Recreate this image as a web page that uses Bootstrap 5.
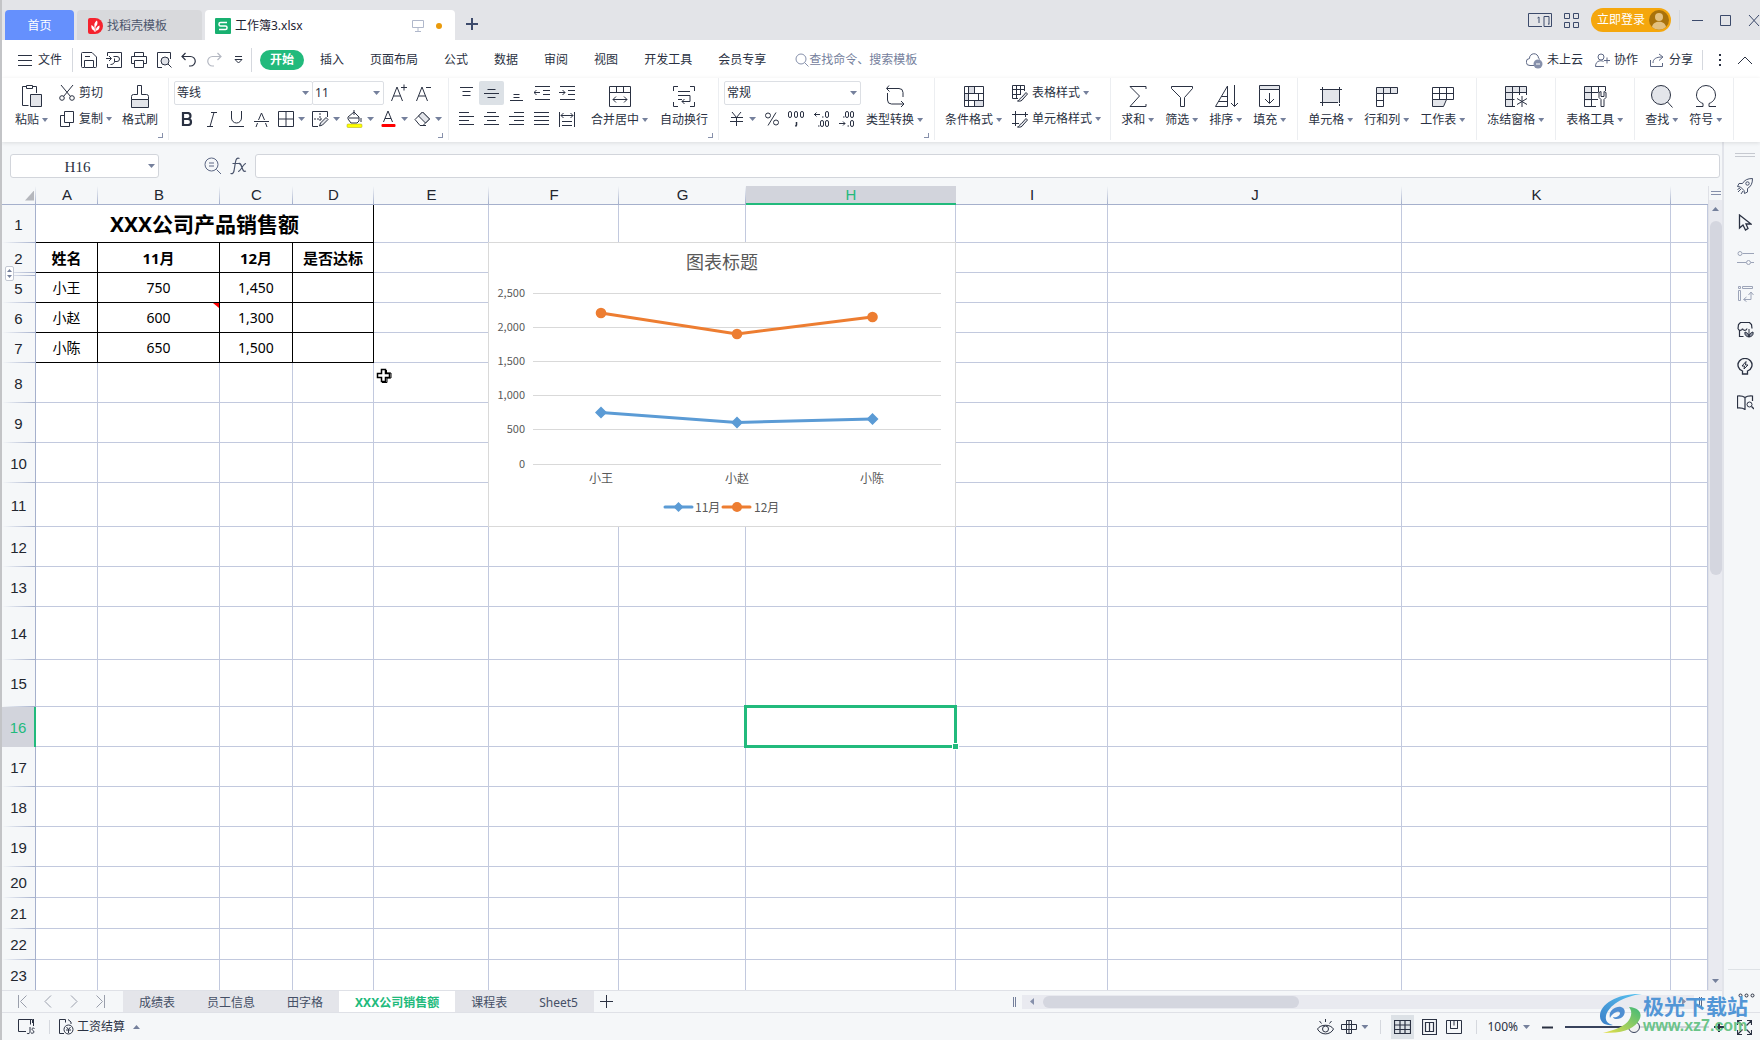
<!DOCTYPE html>
<html lang="zh-CN">
<head>
<meta charset="utf-8">
<meta name="viewport" content="width=device-width, initial-scale=1">
<title>工作簿3.xlsx</title>
<link href="https://cdn.jsdelivr.net/npm/bootstrap@5.3.0/dist/css/bootstrap.min.css" rel="stylesheet">
<style>
:root{--ink:#2a3142;--soft:#5c6784;--line:#c2c9de;--axis:#a5b0cc;--green:#22ba7c;--pane:#f5f7f9;--track:#e9eaf0;--thumb:#d4d6df}
body{height:100vh;min-width:1200px;overflow:hidden;background:var(--pane);color:var(--ink);font:12px/16px "Noto Sans","Noto Sans CJK SC",sans-serif;border-left:2px solid #c3c4c7}
svg{display:block;flex:none;fill:none;stroke:currentColor;stroke-width:1}
button,.menu-link{border:0;background:none;padding:0;color:inherit;text-decoration:none;white-space:nowrap}
input,select{font:inherit;color:inherit}
.caret-d,.caret-u{flex:none;width:7px;height:4px;background:#75809c;clip-path:polygon(0 0,100% 0,50% 100%)}
.caret-u{clip-path:polygon(50% 0,100% 100%,0 100%)}
.vr-line{width:1px;background:#d5d8de;flex:none}
/* title bar */
.titlebar{height:40px;background:#e3e4e8;color:#3c4a6b;padding-left:3px}
.doc-tab{height:30px;border-radius:4px 4px 0 0;margin-right:3px;padding-top:2px}
.tab-home{width:69px;background:#6590fd;color:#fff}
.tab-docer{width:125px;background:#d8d9dc;color:#4c566d;padding-left:11px}
.tab-book{width:250px;background:#fff;color:#1d2333;padding:2px 13px 0 10px}
.unsaved{width:6px;height:6px;background:#ea9a0b}
.login{height:24px;width:80px;border-radius:12px;background:#f5a70d;color:#fff;padding:0 2px 0 6px}
/* menu bar */
.menubar{height:38px;background:#fff;padding-top:2px}
.quick button{width:25px;height:24px}
.menu-link{padding:2px 13px}
.menu-link.on{background:var(--green);color:#fff;font-weight:700;border-radius:10px;padding:2px 10px;margin-right:3px}
.find-cmd{border:0;width:140px;padding:0;outline:0}
.find-cmd::placeholder{color:#75809c;opacity:1}
/* ribbon */
.ribbon{height:64px;background:#fff;box-shadow:0 1px 4px #0000001c;z-index:2}
.grp{position:relative;border-right:1px solid #eceef1;padding-top:3px;height:62px;flex:none}
.grp-std{padding-left:10px;padding-right:11px}
.big{display:flex;flex-direction:column;align-items:center;padding-top:3px;gap:4px}
.big .cap{display:flex;align-items:center}
.big .caret-d,.txt .caret-d{margin-left:3px;width:6px}
.slot{display:flex;align-items:center;justify-content:center;width:25px;height:24px;flex:none}
.slot-dd{width:34px;justify-content:flex-start;padding-left:4px;gap:4px}
.slot.on{background:#dce1e6;border-radius:2px}
.txt{display:flex;align-items:center;height:24px}
.txt svg{margin-right:4px}
.launch{position:absolute;right:5px;bottom:2px;width:5px;height:5px;border:solid #8690ab;border-width:0 1px 1px 0}
.pick{position:relative;height:24px}
.pick select,.namebox input{appearance:none;width:100%;height:100%;border:1px solid #dcdfe4;border-radius:2px;background:#fff;padding:0 6px 0 2px;outline:0}
.pick .caret-d,.namebox .caret-d{position:absolute;right:4px;top:10px}
/* formula bar */
.fxbar{height:44px;padding:12px 2px 8px 8px}
.namebox{position:relative;width:149px;height:24px}
.namebox input{font:15px/20px "Liberation Serif",serif;text-align:center;padding:2px 14px 0 0;border-color:#d2d5db;border-radius:3px}
.fx-input{border:1px solid #d2d5db;border-radius:3px;background:#fff;height:24px;outline:0;min-width:0}
/* sheet */
.sheet{overflow:hidden;min-height:0;min-width:0;background:#fff}
.cells{table-layout:fixed;border-collapse:separate;border-spacing:0;width:100%;color:#000}
.cells th,.cells td{padding:1px 0 0;text-align:center;vertical-align:middle;overflow:visible;white-space:nowrap}
.cells td{border-right:1px solid var(--line);border-bottom:1px solid var(--line);position:relative;font:14px/20px "Noto Sans","Noto Sans CJK SC",sans-serif}
.cells th{font:400 15px/20px "Liberation Sans",sans-serif;color:#22262f;background:var(--pane)}
.cells thead th{height:19px;padding:0;line-height:18px;border-bottom:1px solid var(--axis);background:linear-gradient(#a5b0cc00,#a5b0cc) right/1px 100% no-repeat var(--pane)}
.cells thead th:last-child{background:var(--pane)}
.cells tbody th{position:relative;border-right:1px solid var(--axis);background:linear-gradient(90deg,#a5b0cc00,#a5b0cc) bottom/100% 1px no-repeat var(--pane)}
.cells thead th.sel{background:#d2d4dc;color:var(--green);border-bottom:2px solid var(--green);line-height:17px}
.cells tbody th.sel{background:#d2d4dc;color:var(--green);border-right:2px solid var(--green)}
.cells td.ink{border-color:#000}
.cells td.hd{font-size:15px;font-weight:700}
.cells td.ttl{font-size:21px;line-height:28px;font-weight:700;padding:0}
.corner{width:9px;height:10px;margin:1px 2px 0 auto;background:#b5b7bd;clip-path:polygon(100% 0,100% 100%,0 100%)}
.note{position:absolute;right:0;top:0;width:6px;height:5px;background:red;clip-path:polygon(0 0,100% 0,100% 100%)}
.fold{position:absolute;left:3px;top:-7px;width:9px;height:15px;background:#fff;border:1px solid #c3c8d3;border-radius:2px;display:flex;flex-direction:column;align-items:center;justify-content:center;gap:3px}
.fold i{width:5px;height:3px}
.pick-box{position:absolute;inset:-2px;border:3px solid var(--green);z-index:1}
.pick-box i{position:absolute;right:-5px;bottom:-5px;width:7px;height:7px;background:var(--green);border:1px solid #fff}
.fold-mark{position:absolute;left:0;right:0;top:2px;height:1px;background:linear-gradient(90deg,#a5b0cc00,#a5b0cc)}
.chart{position:absolute;left:486px;top:56px;background:#fff;z-index:1}
.chart text{stroke:none;fill:#595959;font-family:"Noto Sans CJK SC",sans-serif;font-size:12px}
.chart .ax{font-size:11px;text-anchor:end}
.pointer{position:absolute;left:374px;top:182px;z-index:1}
.vscroll{width:14px;background:var(--track);border-left:1px solid #dfe1e7}
.vscroll .split{height:14px;background:var(--pane);width:100%}
.vscroll .knob{width:12px;height:44%;border-radius:6px;background:var(--thumb)}
.side{width:38px;border-left:2px solid #e2e4ea;color:var(--ink)}
.side button{height:36px;width:100%;display:flex;justify-content:center;align-items:center;padding-left:6px}
.side .dim{color:#9ca4b8}
/* sheet tabs */
.tabsbar{height:22px;border-top:1px solid #dfe1e7}
.leaf{height:21px;padding:2px 16px 0;background:#e4e5ea;color:#454f66}
.leaf.on{background:#fff;color:var(--green);font-weight:700}
.tabnav button{width:26px;color:#9a9fac}
.hscroll{width:672px;height:14px;background:var(--track)}
.hscroll .knob{width:256px;height:12px;border-radius:6px;background:var(--thumb);margin-left:9px}
.tri-l{width:4px;height:7px;background:#8690ab;clip-path:polygon(100% 0,100% 100%,0 50%)}
.statusbar{height:28px;border-top:1px solid #dfe1e7;padding-top:1px}
.view-on{background:#dce1e6}
.zoomer{appearance:none;width:144px;height:14px;background:linear-gradient(90deg,#38425c 48%,#cfd3db 48%) center/100% 2px no-repeat;margin:0}
.zoomer::-webkit-slider-thumb{appearance:none;width:12px;height:12px;border-radius:50%;border:1px solid #38425c;background:#f1f1f1}
.brand{position:absolute;right:12px;bottom:5px;z-index:5;pointer-events:none}
.brand b{font:700 21px/24px "Noto Sans CJK SC",sans-serif;color:#5296d6}
.brand span{font:700 16px/18px "Liberation Sans",sans-serif;color:#6bc489}
</style>
<script src="https://cdn.jsdelivr.net/npm/bootstrap@5.3.0/dist/js/bootstrap.bundle.min.js"></script>
</head>
<body class="d-flex flex-column m-0 position-relative">

<header class="titlebar d-flex align-items-end flex-shrink-0">
  <button class="doc-tab tab-home">首页</button>
  <button class="doc-tab tab-docer d-flex align-items-center">
    <svg width="15" height="16" class="me-1" stroke="none"><path d="M0 2a2 2 0 0 1 2-2h5a8 8 0 0 1 0 16H2a2 2 0 0 1-2-2z" fill="#f5222d" stroke="none"/><path d="M7 14V8" stroke="#fff" stroke-width="1"/><path d="M7 13C3.500 12 3 9 3.500 7 5.500 8 7 10 7 13zM7 9C5.500 6 7 4 9 2.500 10 5 9.500 7.500 7 9zM7.500 13C8 10 9 8.500 11.500 7.500c.5 3-1 5-4 5.500z" fill="#fff" stroke="none"/></svg>找稻壳模板</button>
  <div class="doc-tab tab-book d-flex align-items-center">
    <svg width="16" height="16" class="me-1"><rect width="16" height="16" rx="1" fill="#18b070" stroke="none"/><path d="M12 4.500H5.500a1.500 1.500 0 0 0-1.500 1.500v.5A1.500 1.500 0 0 0 5.500 8h5A1.500 1.500 0 0 1 12 9.500v.5a1.500 1.500 0 0 1-1.500 1.500H4" stroke="#fff" stroke-width="1.500"/></svg>
    <span>工作簿3.xlsx</span>
    <svg width="12" height="12" class="ms-auto" style="margin-right:12px" color="#b0b8cb"><path d="M.5.5h11v7H.5zM6 8v3M3 11.500h6"/></svg>
    <span class="unsaved rounded-circle"></span>
  </div>
  <button class="ms-2 mb-2" style="padding-bottom:2px" aria-label="新建"><svg width="12" height="12"><path d="M6 0v12M0 6h12" stroke-width="2"/></svg></button>
  <div class="d-flex align-items-center ms-auto h-100">
    <button aria-label="单窗口"><svg width="24" height="14"><path d="M14 13.500H.5V.5h23v13H16V3.500h5v8M11 4v6M9.500 5l1.500-1M20 11h1"/></svg></button>
    <button aria-label="应用" class="mx-2 px-1"><svg width="15" height="15"><path d="M.5.5h5v5h-5zM9.500.5h5v5h-5zM.5 9.500h5v5h-5zM9.500 9.500h5v5h-5z"/></svg></button>
    <button class="login d-flex align-items-center justify-content-between">立即登录<svg width="20" height="20"><circle cx="10" cy="10" r="10" fill="#a9720b" stroke="none"/><circle cx="10" cy="7" r="4" fill="#e3c07f" stroke="none"/><path d="M3 17c1-7 13-7 14 0a10 10 0 0 1-14 0z" fill="#e3c07f" stroke="none"/></svg></button>
    <span class="vr-line ms-2" style="height:20px"></span>
    <button aria-label="最小化" style="margin:0 17px 0 12px"><svg width="11" height="11"><path d="M0 5.500h11"/></svg></button>
    <button aria-label="最大化" style="margin-right:17px"><svg width="11" height="11"><path d="M.5.5h10v10H.5z"/></svg></button>
    <button aria-label="关闭"><svg width="12" height="11"><path d="M1 0l10 11M11 0L1 11"/></svg></button>
  </div>
</header>

<nav class="menubar d-flex align-items-center flex-shrink-0" aria-label="菜单">
  <button class="d-flex align-items-center ms-3"><svg width="14" height="12" style="margin-right:6px"><path d="M0 1.500h14M0 6.500h14M0 11.500h14"/></svg>文件</button>
  <span class="vr-line" style="height:24px;margin:0 3px 0 10px"></span>
  <div class="quick d-flex">
    <button class="slot" aria-label="保存"><svg width="16" height="16"><path d="M3 15.500H1.500A1 1 0 0 1 .5 14.500v-13a1 1 0 0 1 1-1H11L15.500 5v9.500a1 1 0 0 1-1 1H13M3.500 15.500v-7h9v7zM4 4.500h5"/></svg></button>
    <button class="slot" aria-label="输出为PDF"><svg width="16" height="16"><path d="M1.500 4V.5h14v15h-14V12M0 6.500h5M3 4l2.500 2.500L3 9M7.500 4.500H11a2.500 2.500 0 0 1 0 5H8.500V6.500M8.500 9.500c0 2-2 3-4 3"/></svg></button>
    <button class="slot" aria-label="打印"><svg width="16" height="16"><path d="M3.500 4.500v-4h9v4M3.500 11.500h-3v-7h15v7h-3M3.500 8.500h9v7h-9z"/></svg></button>
    <button class="slot" aria-label="打印预览"><svg width="16" height="16"><path d="M6 15.500H1.500V.5h13V7"/><circle cx="9" cy="9" r="4" fill="#e0e2e8"/><path d="M12 12l3.500 3.500"/></svg></button>
    <button class="slot" aria-label="撤销"><svg width="16" height="16"><path d="M4.500 1L1 4.500 4.500 8M1 4.500h8.500a4.500 4.500 0 0 1 0 9.500H8" stroke-width="1.200"/></svg></button>
    <button class="slot" aria-label="恢复" style="color:#b4b8c2"><svg width="16" height="16"><path d="M11.500 1L15 4.500 11.500 8M15 4.500H6.500a4.500 4.500 0 0 0 0 9.500H8" stroke-width="1.200"/></svg></button>
    <button class="slot" aria-label="更多"><svg width="9" height="8"><path d="M1 .5h7M1 3.500h7L4.500 7z"/></svg></button>
  </div>
  <span class="vr-line me-2" style="height:24px"></span>
  <a class="menu-link on" href="#">开始</a><a class="menu-link" href="#">插入</a><a class="menu-link" href="#">页面布局</a><a class="menu-link" href="#">公式</a><a class="menu-link" href="#">数据</a><a class="menu-link" href="#">审阅</a><a class="menu-link" href="#">视图</a><a class="menu-link" href="#">开发工具</a><a class="menu-link" href="#">会员专享</a>
  <label class="d-flex align-items-center ms-3"><svg width="14" height="14" color="#8690ab"><circle cx="6" cy="6" r="5"/><path d="M9.500 9.500l4 4"/></svg><input class="find-cmd" placeholder="查找命令、搜索模板" aria-label="查找命令"></label>
  <div class="d-flex align-items-center ms-auto">
    <button class="d-flex align-items-center"><svg width="17" height="17" class="me-1" color="#5c6784"><path d="M9 13.500H4A3.500 3.500 0 0 1 3.500 6.500 4.500 4.500 0 0 1 12.500 6"/><path d="M12.500 6a3 3 0 0 1 1 1.500"/><circle cx="12" cy="12" r="4.500" fill="#8690ab" stroke="none"/><path d="M10 12h4" stroke="#fff"/></svg>未上云</button>
    <button class="d-flex align-items-center ms-2 ps-1"><svg width="15" height="15" class="me-1" color="#5c6784"><circle cx="6" cy="4" r="3"/><path d="M9 13.500H.5c0-7 7-6 8-5M9 7.500h6M12 4.500v6"/></svg>协作</button>
    <button class="d-flex align-items-center ms-2 ps-1"><svg width="15" height="15" class="me-1" color="#5c6784"><path d="M.5 7v6.500h12V10M3 10c0-4 3-6 9-6M9 1l4 3-4 3.500"/></svg>分享</button>
    <span class="vr-line" style="height:20px;margin:0 15px 0 9px"></span>
    <button aria-label="更多"><svg width="4" height="14"><path d="M2 1v2M2 6v2M2 11v2" stroke-width="2"/></svg></button>
    <button aria-label="收起" class="ms-3 me-2"><svg width="14" height="9"><path d="M0 8l7-7 7 7"/></svg></button>
  </div>
</nav>

<section class="ribbon d-flex position-relative flex-shrink-0" aria-label="开始">
  <div class="grp d-flex" style="padding-left:13px;padding-right:10px">
    <button class="big"><svg width="24" height="24"><path d="M8.500 21.500h-6v-19h4M12.500 2.500h4V9M6.500 1.500h6v3h-6z"/><path d="M10.500 10.500h11v12h-11z" fill="#e3e5ea"/></svg><span class="cap">粘贴<i class="caret-d"></i></span></button>
    <div class="d-flex flex-column gap-0" style="margin:0 10px 0 11px">
      <button class="txt"><svg width="16" height="16"><path d="M2 0l9.500 11.500M14 0L4.500 11.500"/><circle cx="3" cy="13" r="2.300"/><circle cx="13" cy="13" r="2.300"/></svg>剪切</button>
      <button class="txt" style="margin-top:2px"><svg width="16" height="16"><path d="M5.500.5h9v11h-9zM5 4.500H1.500v11h9V12"/></svg>复制<i class="caret-d"></i></button>
    </div>
    <button class="big"><svg width="24" height="24"><path d="M9.500 10.500v-9h4v9h5a2 2 0 0 1 2 2v3h-17v-3a2 2 0 0 1 2-2z"/><path d="M3.500 15.500h17v8h-17z" fill="#e3e5ea"/></svg><span class="cap">格式刷</span></button>
    <i class="launch"></i>
  </div>
  <div class="grp" style="padding-left:5px;padding-right:4px">
    <div class="d-flex">
      <div class="pick" style="width:139px"><select aria-label="字体"><option>等线</option></select><i class="caret-d"></i></div>
      <div class="pick" style="width:72px;margin-left:-1px"><select aria-label="字号"><option>11</option></select><i class="caret-d"></i></div>
      <button class="slot" style="margin-left:2px" aria-label="增大字号"><svg width="16" height="18"><path d="M.5 17L6 3l5.500 14M2.500 12h7M10 3.500h6M13 .5v6"/></svg></button>
      <button class="slot" aria-label="减小字号"><svg width="16" height="18"><path d="M.5 17L6 3l5.500 14M2.500 12h7M10 3.500h5"/></svg></button>
    </div>
    <div class="d-flex" style="margin-top:2px">
      <button class="slot" aria-label="加粗"><svg width="12" height="14"><path d="M2 1h4.500a3 3 0 0 1 0 6H2zM2 7h5a3 3 0 0 1 0 6H2z" stroke-width="2.200"/></svg></button>
      <button class="slot" aria-label="倾斜"><svg width="10" height="15"><path d="M4 .5h6M0 14.500h6M7 .5L3 14.500"/></svg></button>
      <button class="slot" aria-label="下划线"><svg width="15" height="16"><path d="M2.500 0v7a5 5 0 0 0 10 0V0M0 15.500h15"/></svg></button>
      <button class="slot" aria-label="删除线"><svg width="15" height="15"><path d="M2 15l1.500-4M13 15l-1.500-4M4.500 8L7.500 1l3 7M0 9.500h15"/></svg></button>
      <button class="slot slot-dd" aria-label="边框"><svg width="16" height="16"><path d="M.5.5h15v15H.5zM8 .5v15M.5 8h15"/></svg><i class="caret-d"></i></button>
      <button class="slot slot-dd" aria-label="绘图边框"><svg width="17" height="16"><path d="M6 15.500H.5V.5h15V6"/><path d="M8 2v9M2 8h8" stroke-dasharray="2 1"/><path d="M7.500 15l1-3L14 6.500l2 2L10.500 14z" fill="#e3e5ea"/></svg><i class="caret-d"></i></button>
      <button class="slot slot-dd" aria-label="填充颜色"><svg width="17" height="18"><path d="M2 7l6-5 5 5v4l-2 2H5L2 9zM8 0v5M3 8h10"/><path d="M15 8v4"/><rect x="1" y="14" width="15" height="3.500" rx="1" fill="#ff0" stroke="#a7a21c" stroke-width=".5"/></svg><i class="caret-d"></i></button>
      <button class="slot slot-dd" aria-label="字体颜色"><svg width="17" height="18"><path d="M3.500 12l4.500-11 4.500 11M5 8.500h6"/><rect x="1.500" y="14" width="14" height="3" rx="1" fill="red" stroke="none"/></svg><i class="caret-d"></i></button>
      <button class="slot slot-dd" aria-label="清除"><svg width="17" height="16"><path d="M1 8.500L8.500 1 15.500 8 9 14.500H6z"/><path d="M4.500 5L8.500 1 15.500 8l-4 4z" fill="#e3e5ea"/><path d="M6 14.500h6"/></svg><i class="caret-d"></i></button>
    </div>
    <i class="launch"></i>
  </div>
  <div class="grp d-flex" style="padding-left:5px;padding-right:10px">
    <div style="margin-right:12px">
      <div class="d-flex">
        <button class="slot" aria-label="顶端对齐"><svg width="15" height="15"><path d="M1 1.500h13M3.500 5.500h8M3.500 9.500h8" /></svg></button>
        <button class="slot on" aria-label="垂直居中"><svg width="15" height="15"><path d="M3.500 3.500h8M0 7.500h15M3.500 11.500h8"/></svg></button>
        <button class="slot" aria-label="底端对齐"><svg width="15" height="15"><path d="M4.500 8.500h6M4.500 11.500h6M1 14.500h13"/></svg></button>
        <button class="slot" aria-label="减少缩进"><svg width="16" height="14"><path d="M1 .5h15M9 4.500h7M9 8.500h7M1 13.500h15M0 6.500h6M2.500 4L0 6.500 2.500 9"/></svg></button>
        <button class="slot" aria-label="增加缩进"><svg width="16" height="14"><path d="M1 .5h15M9 4.500h7M9 8.500h7M1 13.500h15M0 6.500h6M3.500 4L6 6.500 3.500 9"/></svg></button>
      </div>
      <div class="d-flex" style="margin-top:2px">
        <button class="slot" aria-label="左对齐"><svg width="15" height="14"><path d="M0 .5h10M0 4.500h15M0 8.500h10M0 12.500h15"/></svg></button>
        <button class="slot" aria-label="水平居中"><svg width="15" height="14"><path d="M3 .5h9M0 4.500h15M3 8.500h9M0 12.500h15"/></svg></button>
        <button class="slot" aria-label="右对齐"><svg width="15" height="14"><path d="M5 .5h10M0 4.500h15M5 8.500h10M0 12.500h15"/></svg></button>
        <button class="slot" aria-label="两端对齐"><svg width="15" height="14"><path d="M0 .5h15M0 4.500h15M0 8.500h15M0 12.500h15"/></svg></button>
        <button class="slot" aria-label="分散对齐"><svg width="16" height="15"><path d="M.5 0v15M15.500 0v15M2 3.500h12M4.500 1L2 3.500 4.500 6M11.500 1L14 3.500 11.500 6M3 9.500h10M3 13.500h10"/></svg></button>
      </div>
    </div>
    <button class="big"><svg width="24" height="24"><path d="M1.500 2.500h21v20h-21zM1.500 8.500h21M8.500 2.500v6M15.500 2.500v6M5 15.500h14M8 12.500l-3 3 3 3M16 12.500l3 3-3 3"/></svg><span class="cap">合并居中<i class="caret-d"></i></span></button>
    <button class="big" style="margin-left:12px"><svg width="24" height="24"><path d="M1.500 7V2.500H6M18 2.500h4.500V7M22.500 18v4.500H18M6 22.500H1.500V18M6 7.500h12M6 11.500h12M6 15.500h4M18 11.500v6h-8M12.500 15L10 17.500l2.500 2.500"/></svg><span class="cap">自动换行</span></button>
    <i class="launch"></i>
  </div>
  <div class="grp d-flex" style="padding-left:5px;padding-right:11px">
    <div style="margin-right:5px">
      <div class="pick" style="width:137px"><select aria-label="数字格式"><option>常规</option></select><i class="caret-d"></i></div>
      <div class="d-flex" style="margin-top:2px">
        <button class="slot slot-dd" aria-label="货币"><svg width="17" height="14"><path d="M4 0l4.500 5.500L13 0M8.500 5.500V14M3 5.500h12M2 9.500h13"/></svg><i class="caret-d"></i></button>
        <button class="slot" style="margin-left:1px" aria-label="百分比"><svg width="14" height="14"><circle cx="3" cy="3.500" r="2.500"/><circle cx="11" cy="10.500" r="2.500"/><path d="M11 .5L3 13.500"/></svg></button>
        <button class="slot" aria-label="千位分隔"><svg width="17" height="16"><rect x=".5" y=".5" width="3" height="6" rx="1.500"/><rect x="6.500" y=".5" width="3" height="6" rx="1.500"/><rect x="12.500" y=".5" width="3" height="6" rx="1.500"/><path d="M8.500 11v3l-1 1.500" stroke-width="1.500"/></svg></button>
        <button class="slot" aria-label="增加小数"><svg width="16" height="16"><path d="M0 3.500h6M2.500 1.500l-2 2 2 2M8 6h1.500M4 15h1.500"/><rect x="11.500" y=".5" width="3" height="6" rx="1.500"/><rect x="6.500" y="9.500" width="3" height="6" rx="1.500"/><rect x="11.500" y="9.500" width="3" height="6" rx="1.500"/></svg></button>
        <button class="slot" aria-label="减少小数"><svg width="16" height="16"><path d="M0 12.500h6M4 10.500l2 2-2 2M4 6h1.500M8.500 15H10"/><rect x="11.500" y="9.500" width="3" height="6" rx="1.500"/><rect x="6.500" y=".5" width="3" height="6" rx="1.500"/><rect x="11.500" y=".5" width="3" height="6" rx="1.500"/></svg></button>
      </div>
    </div>
    <button class="big"><svg width="24" height="24"><path d="M6 1.500L3.500 4.500l3 3M4 4.500h12a4 4 0 0 1 4 4V13M4.500 9v7a4 4 0 0 0 4 4H21M18 17l3 3-3 3"/></svg><span class="cap">类型转换<i class="caret-d"></i></span></button>
    <i class="launch"></i>
  </div>
  <div class="grp d-flex" style="padding-left:10px;padding-right:9px">
    <button class="big"><svg width="24" height="24"><path d="M7 2.500h5v7H7zM2 9.500h5v7H2zM12 16.500h10v6H12z" fill="#dcdee5" stroke="none"/><path d="M2.500 2.500h19v20h-19zM2.500 9.500h19M2.500 16.500h19M6.500 2.500v20M12.500 2.500v7M12.500 16.500v6M16.500 9.500v7"/></svg><span class="cap">条件格式<i class="caret-d"></i></span></button>
    <div class="d-flex flex-column" style="margin-left:10px">
      <button class="txt"><svg width="16" height="17"><path d="M6 13.500H.5V.5h12V6M.5 4.500h12M.5 9.500H9M4.500.5v13M8.500.5V10"/><path d="M5.500 16c2 0 2-3 4-3.500L14 7.500l1.500 1.500-4.500 5c-1 2-3 2.500-5.500 2z" fill="#e3e5ea"/></svg>表格样式<i class="caret-d"></i></button>
      <button class="txt" style="margin-top:2px"><svg width="16" height="17"><path d="M0 3.500h16M3.500 0v15M13.500 1v5M0 12.500h7"/><path d="M5.500 16c2 0 2-3 4-3.500L14 7.500l1.500 1.500-4.500 5c-1 2-3 2.500-5.500 2z" fill="#e3e5ea"/></svg>单元格样式<i class="caret-d"></i></button>
    </div>
  </div>
  <div class="grp grp-std d-flex" style="gap:11px">
    <button class="big"><svg width="24" height="24"><path d="M20 5V2.500H4L13.500 12 4 22.500h16V20"/></svg><span class="cap">求和<i class="caret-d"></i></span></button>
    <button class="big"><svg width="24" height="24"><path d="M1.500 2.500h21v2l-8 9v9h-4v-9l-9-9z"/></svg><span class="cap">筛选<i class="caret-d"></i></span></button>
    <button class="big"><svg width="24" height="24"><path d="M1.500 22.500L13.500 2v20.500zM4 17.500h9.500M7.500 12.500h6M20.500 1v21M17 19l3.500 3.500L24 19" /></svg><span class="cap">排序<i class="caret-d"></i></span></button>
    <button class="big"><svg width="24" height="24"><path d="M1.500 1.500h20v4h-20z" fill="#e3e5ea"/><path d="M1.500 5.500v17h20v-17M11.500 9v10M7 15l4.500 4.500L16 15"/></svg><span class="cap">填充<i class="caret-d"></i></span></button>
  </div>
  <div class="grp grp-std d-flex" style="gap:11px">
    <button class="big"><svg width="24" height="24"><path d="M3.500 5.500h17v13h-17z" fill="#e3e5ea" stroke="none"/><path d="M1 5.500h22M3.500 3v19M20.500 3v16M1 18.500h18M20.500 20v2"/></svg><span class="cap">单元格<i class="caret-d"></i></span></button>
    <button class="big"><svg width="24" height="24"><path d="M1.500 3.500h21v6h-21z" fill="#e3e5ea"/><path d="M1.500 9.500v13h7V3.500M15.500 3.500v6M1.500 16.500h7"/></svg><span class="cap">行和列<i class="caret-d"></i></span></button>
    <button class="big"><svg width="24" height="24"><path d="M1.500 3.500h21v12h-21zM1.500 9.500h21M8.500 3.500v12M15.500 3.500v12"/><path d="M1.500 15.500v7h11l3-7z" fill="#e3e5ea"/></svg><span class="cap">工作表<i class="caret-d"></i></span></button>
  </div>
  <div class="grp grp-std"><button class="big"><svg width="24" height="24"><path d="M1.500 2.500h21v6h-14v14h-7z" fill="#e3e5ea" stroke="none"/><path d="M11 22.500H1.500v-20h21V11M1.500 8.500h21M8.500 2.500v20M15.500 2.500V11M1.500 15.500h9M18 12v11M13 14.500l10 6M13 20.500l10-6"/></svg><span class="cap">冻结窗格<i class="caret-d"></i></span></button></div>
  <div class="grp grp-std"><button class="big"><svg width="24" height="24"><path d="M1.500 2.500h7v14h-7z" fill="#e3e5ea" stroke="none"/><path d="M13 22.500H1.500v-20h21V7M1.500 8.500H15M8.500 2.500v20M15.500 2.500v6M1.500 15.500H15"/><path d="M16 8.500v5l2 2v7h3v-7l2-2v-5l-2-1v5h-3v-5z" fill="#fff"/></svg><span class="cap">表格工具<i class="caret-d"></i></span></button></div>
  <div class="grp grp-std d-flex" style="gap:11px">
    <button class="big"><svg width="24" height="24"><circle cx="11" cy="11" r="9.500" fill="#e3e5ea"/><path d="M17.500 18l5 5.500"/></svg><span class="cap">查找<i class="caret-d"></i></span></button>
    <button class="big"><svg width="24" height="24"><path d="M2 22.500h7v-3C5 18 2.500 15 2.500 11a9.500 9.500 0 0 1 19 0c0 4-2.500 7-6.500 8.500v3h7"/></svg><span class="cap">符号<i class="caret-d"></i></span></button>
  </div>
</section>

<div class="d-flex flex-fill" style="min-height:0">
  <main class="d-flex flex-column flex-fill" style="min-width:0">
    <div class="fxbar d-flex align-items-center flex-shrink-0">
      <div class="namebox"><input value="H16" aria-label="名称框"><i class="caret-d"></i></div>
      <button aria-label="查找公式" style="margin-left:45px"><svg width="18" height="18" color="#5c6784"><circle cx="7.500" cy="7.500" r="6.500"/><path d="M12.500 12.500l4.500 4.500M5 6h5M5 9h5"/></svg></button>
      <button aria-label="插入函数" class="ms-2 me-2"><svg width="17" height="18" color="#4a546c"><path d="M9.500 1.500C7 .5 6 2 5.500 5L4 14c-.5 2-1.500 3-3.500 2.500M2.500 6.500h6M8.500 6.500c2-.5 2.500 1 3.500 4s1.500 4.500 4 3.500M16 6.500c-3 0-5 8-8 8" stroke-width="1.200"/></svg></button>
      <input class="fx-input flex-fill" aria-label="编辑栏">
    </div>
    <div class="d-flex flex-fill" style="min-height:0">
      <div class="sheet flex-fill position-relative">
        <table class="cells">
          <colgroup><col style="width:34px"><col style="width:62px"><col style="width:122px"><col style="width:73px"><col style="width:81px"><col style="width:115px"><col style="width:130px"><col style="width:127px"><col style="width:210px"><col style="width:152px"><col style="width:294px"><col style="width:269px"><col></colgroup>
          <thead><tr><th><div class="corner"></div></th><th>A</th><th>B</th><th>C</th><th>D</th><th>E</th><th>F</th><th>G</th><th class="sel">H</th><th>I</th><th>J</th><th>K</th><th></th></tr></thead>
          <tbody id="rows">
            <tr style="height:38px"><th>1</th><td class="ink ttl" colspan="4">XXX公司产品销售额</td></tr>
            <tr style="height:30px"><th>2</th><td class="ink hd">姓名</td><td class="ink hd">11月</td><td class="ink hd">12月</td><td class="ink hd">是否达标</td></tr>
            <tr style="height:30px"><th><i class="fold-mark"></i><span class="fold"><i class="caret-u"></i><i class="caret-d"></i></span>5</th><td class="ink">小王</td><td class="ink">750</td><td class="ink">1,450</td><td class="ink"></td></tr>
            <tr style="height:30px"><th>6</th><td class="ink">小赵</td><td class="ink">600<i class="note"></i></td><td class="ink">1,300</td><td class="ink"></td></tr>
            <tr style="height:30px"><th>7</th><td class="ink">小陈</td><td class="ink">650</td><td class="ink">1,500</td><td class="ink"></td></tr>
          </tbody>
        </table>
        <svg class="chart" width="468" height="285" role="img" aria-label="图表标题">
          <rect x=".5" y=".5" width="467" height="284" stroke="#d9d9d9"/>
          <text x="234" y="27" text-anchor="middle" style="font-size:18px">图表标题</text>
          <path d="M45 51.500h408M45 85.500h408M45 119.500h408M45 153.500h408M45 187.500h408M45 222.500h408" stroke="#d9d9d9"/>
          <text class="ax" x="37" y="55">2,500</text><text class="ax" x="37" y="89">2,000</text><text class="ax" x="37" y="123">1,500</text><text class="ax" x="37" y="157">1,000</text><text class="ax" x="37" y="191">500</text><text class="ax" x="37" y="226">0</text>
          <g stroke="#ed7d31" stroke-width="3" stroke-linecap="round"><path d="M113 71l136 21 135-17M235 265h27"/><g fill="#ed7d31" stroke="none"><circle cx="113" cy="71" r="5.300"/><circle cx="249" cy="92" r="5.300"/><circle cx="384.500" cy="75" r="5.300"/><circle cx="249" cy="265" r="5"/></g></g>
          <g stroke="#5b9bd5" stroke-width="3" stroke-linecap="round"><path d="M113 170.500l136 10 135-3.500M177 265h27"/><g fill="#5b9bd5" stroke="none"><path d="M113 164.500l6 6-6 6-6-6zM249 174.500l6 6-6 6-6-6zM384.500 171l6 6-6 6-6-6zM190.500 260l5 5-5 5-5-5z"/></g></g>
          <g text-anchor="middle"><text x="113" y="241">小王</text><text x="249" y="241">小赵</text><text x="384" y="241">小陈</text></g>
          <text x="207" y="270">11月</text><text x="266" y="270">12月</text>
        </svg>
        <svg class="pointer" width="16" height="16"><path d="M5.500 1.500h4v4h4v4h-4v4h-4v-4h-4v-4h4z" fill="#fff" stroke="#000" stroke-width="1.500"/><path d="M10.500 2v3h4.500v5h-4v4.500H6" stroke="#000"/></svg>
      </div>
      <div class="vscroll d-flex flex-column align-items-center flex-shrink-0">
        <div class="split d-flex justify-content-center align-items-center"><svg width="10" height="5" color="#8690ab"><path d="M0 .5h10M0 3.500h10"/></svg></div>
        <i class="caret-u" style="margin:7px 0 10px"></i>
        <div class="knob"></div>
        <i class="caret-d mt-auto" style="margin-bottom:7px"></i>
      </div>
    </div>
    <div class="tabsbar d-flex align-items-start flex-shrink-0">
      <div class="tabnav d-flex align-items-center h-100" style="padding:0 10px 0 7px">
        <button class="slot" aria-label="第一张"><svg width="9" height="13"><path d="M.5 0v13M8.500.5l-6 6 6 6"/></svg></button>
        <button class="slot" aria-label="上一张"><svg width="8" height="13"><path d="M7 .5l-6 6 6 6"/></svg></button>
        <button class="slot" aria-label="下一张"><svg width="8" height="13"><path d="M1 .5l6 6-6 6"/></svg></button>
        <button class="slot" aria-label="最后一张"><svg width="9" height="13"><path d="M8.500 0v13M.5.5l6 6-6 6"/></svg></button>
      </div>
      <button class="leaf">成绩表</button><button class="leaf">员工信息</button><button class="leaf">田字格</button><button class="leaf on">XXX公司销售额</button><button class="leaf">课程表</button><button class="leaf">Sheet5</button>
      <button class="slot h-100" aria-label="新建工作表"><svg width="13" height="13"><path d="M6.500 0v13M0 6.500h13"/></svg></button>
      <div class="d-flex align-items-center ms-auto h-100" style="padding-right:20px">
        <svg width="3" height="10" color="#75809c" style="margin-right:6px"><path d="M.5 0v10M2.500 0v10"/></svg>
        <div class="hscroll d-flex align-items-center ps-2"><i class="tri-l"></i><div class="knob"></div><i class="tri-l ms-auto me-2" style="transform:scaleX(-1)"></i></div>
        <svg width="3" height="10" color="#5c6784" style="margin-left:5px"><path d="M.5 0v10M2.500 0v10"/></svg>
      </div>
    </div>
  </main>
  <aside class="side d-flex flex-column align-items-center flex-shrink-0">
    <svg width="20" height="4" color="#c6c9d0" style="margin:11px 0 11px 6px"><path d="M0 .5h20M0 3.500h20"/></svg>
    <button aria-label="快捷"><svg width="16" height="16" color="#47516a"><path d="M15.500.5c-5 0-8 1.500-10 5H2L.5 8.500l3 .5 3.500 3.500.5 3 3-1.500v-3.500c3.500-2 5-5 5-10z"/><circle cx="10.500" cy="5.500" r="1.700"/><path d="M4 11l-3 3M3 10l-2.500 1.500M6 13l-2 3"/></svg></button>
    <button aria-label="选择"><svg width="14" height="17"><path d="M1.500 1v13l3.500-3 2.500 5 2.500-1.500-2-4.500H13z" stroke-width="1.300"/></svg></button>
    <button class="dim" aria-label="属性"><svg width="17" height="14"><circle cx="3" cy="2.500" r="2"/><path d="M5.500 2.500H17M0 11.500h9M14 11.500h3"/><circle cx="11.500" cy="11.500" r="2"/></svg></button>
    <button class="dim" aria-label="透视表"><svg width="17" height="16"><path d="M1.500.5h2v2h-2zM5.500.5h10v2h-10zM1.500 4.500h2v10h-2zM14 6.500v7H7M11.500 9L14 6l2.500 3M9.500 11L6.500 13.500l3 2"/></svg></button>
    <button aria-label="稻壳"><svg width="17" height="16"><path d="M6.500 14.500h-4V8.500M1 6.500l.5-4 2-2h9l2 2 .5 4M1 6.500c.5 2.500 4 2.500 4.500 0M5.500 6.500c.5 2.500 4 2.500 4.500 0" stroke-width="1.200"/><path d="M12 15V7M12 15c-3.500-.5-4.500-2.500-4-5 2.500.5 4 2.500 4 5zM12 15c3.500-.5 4.500-2.500 4-5-2.500.5-4 2.500-4 5z" fill="#8b91a0" stroke-width="1"/></svg></button>
    <button aria-label="灵感"><svg width="16" height="17"><path d="M5.500 13A7 6.500 0 1 1 10.500 13v3h-5z" stroke-width="1.300"/><path d="M9 3.500L5 8h2.500l-.5 3L11 7H8.500z"/></svg></button>
    <button aria-label="帮助"><svg width="17" height="15"><path d="M8 2.500C6 1 3 .8.500 1v12c2.500-.2 5.500 0 7.500 1.500zM8 2.500C10 1 13 .8 15.500 1v5" stroke-width="1.200"/><circle cx="12.500" cy="9.500" r="2.500"/><path d="M14.500 11.500l2.500 2.500" stroke-width="1.300"/></svg></button>
    <div class="mt-auto w-100 ps-1"><div class="border-top" style="height:43px;padding:23px 0 0 10px"><svg width="17" height="5"><circle cx="2.500" cy="2.500" r="1.500"/><circle cx="8.500" cy="2.500" r="1.500"/><circle cx="14.500" cy="2.500" r="1.500"/></svg></div></div>
  </aside>
</div>

<footer class="statusbar d-flex align-items-center ps-3 flex-shrink-0">
  <button aria-label="宏"><svg width="17" height="16"><path d="M8 12.500H.5V.5h14V4M4 12.500l3 0M12.500.5v5M15.500 0v7M12 8v5c0 2-3 2-3 1M16.500 9.500c-3-1.500-3 1.500-1.500 2s1.500 3.500-2 2.500"/></svg></button>
  <span class="vr-line" style="height:14px;margin:0 9px 0 14px"></span>
  <button class="d-flex align-items-center"><svg width="15" height="16" style="margin-right:3px"><path d="M5 14.500H.5V.5h6M12 5V3L9 .5M6.500.5v3"/><circle cx="9.500" cy="10.500" r="4.500"/><path d="M7.500 8l2 2.500 2-2.500M9.500 10v4M7 11h5"/></svg>工资结算<i class="caret-u ms-2"></i></button>
  <div class="d-flex align-items-center ms-auto" style="padding-right:8px">
    <button aria-label="护眼"><svg width="17" height="16"><path d="M.5 10c3-5 13-5 16 0-3 6.500-13 6.500-16 0zM8.500 0v3M2.500 2l2 2.500M14.500 2l-2 2.500"/><circle cx="8.500" cy="10" r="3"/></svg></button>
    <button class="d-flex align-items-center" aria-label="阅读" style="margin:0 12px 0 7px"><svg width="16" height="14" class="me-1"><path d="M5.500.5h5v13h-5zM.5 4.500h15v5H.5zM8 .5v13"/></svg><i class="caret-d"></i></button>
    <span class="vr-line" style="height:14px;margin-right:10px"></span>
    <button class="slot view-on" aria-label="普通视图" style="width:23px"><svg width="17" height="14"><path d="M.5.5h16v13H.5zM.5 5h16M.5 9.500h16M6 .5v13M11 .5v13" stroke-width="1.200"/></svg></button>
    <button class="slot" aria-label="分页预览" style="width:24px;margin:0 3px"><svg width="15" height="16"><path d="M.5.5h14v15H.5zM3.500 3.500h8v9h-8zM7.500 3.500v9" stroke-width="1.200"/></svg></button>
    <button class="slot" aria-label="页面布局" style="width:20px"><svg width="16" height="14"><path d="M.5.5h15v13H.5zM4.500.5v8h7v-8M8 .5v5M4.500 8.500h7"/></svg></button>
    <span class="vr-line" style="height:14px;margin:0 10px 0 12px"></span>
    <button class="d-flex align-items-center">100%<i class="caret-d" style="margin:0 12px 0 5px"></i></button>
    <button aria-label="缩小"><svg width="11" height="11"><path d="M0 5.500h11" stroke-width="2"/></svg></button>
    <input type="range" class="zoomer" value="48" aria-label="缩放" style="margin:0 5px 0 12px">
    <button aria-label="放大"><svg width="10" height="10"><path d="M0 5h10M5 0v10" stroke-width="2"/></svg></button>
    <button aria-label="全屏" style="margin-left:13px"><svg width="15" height="15"><path d="M.5 5V.5H5M.5.5l5 5M10 .5h4.500V5M14.500.5l-5 5M14.500 10v4.500H10M14.500 14.500l-5-5M5 14.500H.5V10M.5 14.500l5-5" stroke-width="1.200"/></svg></button>
  </div>
</footer>

<div class="brand d-flex align-items-center">
  <svg width="44" height="42" viewBox="0 0 44 42" stroke="none"><defs><linearGradient id="bl" x1="0" y1="1" x2="1" y2="0"><stop offset="0" stop-color="#3b7fc8"/><stop offset="1" stop-color="#58c5f2"/></linearGradient><linearGradient id="gr" x1="0" y1="1" x2="1" y2="0"><stop offset="0" stop-color="#e8e04a"/><stop offset="1" stop-color="#3fb878"/></linearGradient></defs><path d="M43 1C20 0 1 10 1 23c0 7 6 10 13 9-5-1-8-4-7-9C9 13 24 3 43 1z" fill="url(#bl)" stroke="none"/><path d="M11 25c-2-7 5-12 11-11 5 1 5 8 0 11-4 2-8 1-8-1 3 1 7-1 7-4-1-3-8 0-10 5z" fill="#4f8fd2" stroke="none"/><path d="M30 14c12 1 14 8 9 15-6 8-16 11-35 11 12-3 22-7 26-13 3-5 3-9 0-13z" fill="url(#gr)" stroke="none"/></svg>
  <div class="d-flex flex-column"><b>极光下载站</b><span>www.xz7.com</span></div>
</div>

<script>
// Fill the unused cells of the data rows, then append the blank rows.
const body = document.getElementById('rows');
const columns = 12;
const addCells = (tr, n) => { for (let i = 0; i < n; i++) tr.insertCell(); };
[...body.rows].forEach(tr => addCells(tr, columns - 4));
[40,40,40,44,40,40,53,47,40,40,40,40,31,31,31,31].forEach((height, i) => {
  const tr = body.insertRow();
  const th = document.createElement('th');
  tr.style.height = height + 'px';
  th.textContent = i + 8;
  tr.append(th);
  addCells(tr, columns);
  if (i + 8 === 16) {
    th.className = 'sel';
    tr.cells[8].innerHTML = '<span class="pick-box"><i></i></span>';
  }
});
</script>
</body>
</html>
